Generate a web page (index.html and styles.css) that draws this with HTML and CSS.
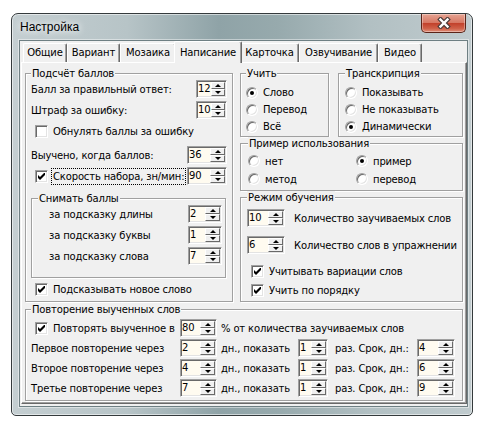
FILE: index.html
```html
<!DOCTYPE html>
<html lang="ru">
<head>
  <meta charset="UTF-8" />
  <title>Настройка</title>
  <link rel="stylesheet" href="styles.css">
</head>
<body>
  <div class="window">
    <div class="titlebar">
      <span class="title">Настройка</span>
      <div class="close">
        <svg width="16" height="12" viewBox="0 0 16 12">
          <path d="M4.5 2.5 L11.5 9.5 M11.5 2.5 L4.5 9.5" stroke="#4a3b38" stroke-width="4.6" stroke-linecap="square" fill="none"/>
          <path d="M4.5 2.5 L11.5 9.5 M11.5 2.5 L4.5 9.5" stroke="#fff" stroke-width="2.4" stroke-linecap="square" fill="none"/>
        </svg>
      </div>
    </div>
    <div class="client">
      <div class="tabs">
        <span class="tab tab-general">Общие</span><span class="tab tab-variant">Вариант</span><span class="tab tab-mosaic">Мозаика</span><span class="tab tab-writing active">Написание</span><span class="tab tab-card">Карточка</span><span class="tab tab-voice">Озвучивание</span><span class="tab tab-video">Видео</span>
      </div>
      <div class="panel">
        <div class="top">
          <!-- left column -->
          <fieldset class="group g-score">
            <legend>Подсчёт баллов</legend>
            <div class="row">
              <span>Балл за правильный ответ:</span>
              <span class="spin w31"><span class="val">12</span><i class="arr"><b class="up"></b><b class="dn"></b></i></span>
            </div>
            <div class="row mt3">
              <span>Штраф за ошибку:</span>
              <span class="spin w31"><span class="val">10</span><i class="arr"><b class="up"></b><b class="dn"></b></i></span>
            </div>
            <div class="check reset">
              <i class="cb"></i><span>Обнулять баллы за ошибку</span>
            </div>
            <div class="row mt8">
              <span>Выучено, когда баллов:</span>
              <span class="spin w40"><span class="val">36</span><i class="arr"><b class="up"></b><b class="dn"></b></i></span>
            </div>
            <div class="row mt3">
              <span class="check inrow">
                <i class="cb"><svg width="7" height="7" viewBox="0 0 7 7"><path d="M0 2 L2 4 L6 0 L7 0 L7 2 L2 7 L0 5 Z" fill="#000"/></svg></i><span class="focus">Скорость набора, зн/мин:</span>
              </span>
              <span class="spin w40"><span class="val">90</span><i class="arr"><b class="up"></b><b class="dn"></b></i></span>
            </div>
            <fieldset class="group sub">
              <legend>Снимать баллы</legend>
              <div class="row">
                <span>за подсказку длины</span>
                <span class="spin w34"><span class="val">2</span><i class="arr"><b class="up"></b><b class="dn"></b></i></span>
              </div>
              <div class="row mt3">
                <span>за подсказку буквы</span>
                <span class="spin w34"><span class="val">1</span><i class="arr"><b class="up"></b><b class="dn"></b></i></span>
              </div>
              <div class="row mt3">
                <span>за подсказку слова</span>
                <span class="spin w34"><span class="val">7</span><i class="arr"><b class="up"></b><b class="dn"></b></i></span>
              </div>
            </fieldset>
            <div class="check hint">
              <i class="cb"><svg width="7" height="7" viewBox="0 0 7 7"><path d="M0 2 L2 4 L6 0 L7 0 L7 2 L2 7 L0 5 Z" fill="#000"/></svg></i><span>Подсказывать новое слово</span>
            </div>
          </fieldset>

          <!-- right column -->
          <div class="right">
            <div class="pair">
              <fieldset class="group g-learn">
                <legend>Учить</legend>
                <div class="opt"><i class="rb on"></i>Слово</div>
                <div class="opt"><i class="rb"></i>Перевод</div>
                <div class="opt"><i class="rb"></i>Всё</div>
              </fieldset>
              <fieldset class="group g-trans">
                <legend>Транскрипция</legend>
                <div class="opt"><i class="rb"></i>Показывать</div>
                <div class="opt"><i class="rb"></i>Не показывать</div>
                <div class="opt"><i class="rb on"></i>Динамически</div>
              </fieldset>
            </div>
            <fieldset class="group g-example">
              <legend>Пример использования</legend>
              <div class="opts">
                <div class="opt"><i class="rb"></i>нет</div>
                <div class="opt"><i class="rb on"></i>пример</div>
                <div class="opt"><i class="rb"></i>метод</div>
                <div class="opt"><i class="rb"></i>перевод</div>
              </div>
            </fieldset>
            <fieldset class="group g-mode">
              <legend>Режим обучения</legend>
              <div class="count">
                <span class="spin w38"><span class="val">10</span><i class="arr"><b class="up"></b><b class="dn"></b></i></span>
                <span class="count-text">Количество заучиваемых слов</span>
              </div>
              <div class="count mt9">
                <span class="spin w38"><span class="val">6</span><i class="arr"><b class="up"></b><b class="dn"></b></i></span>
                <span class="count-text">Количество слов в упражнении</span>
              </div>
              <div class="check variations">
                <i class="cb"><svg width="7" height="7" viewBox="0 0 7 7"><path d="M0 2 L2 4 L6 0 L7 0 L7 2 L2 7 L0 5 Z" fill="#000"/></svg></i><span>Учитывать вариации слов</span>
              </div>
              <div class="check order">
                <i class="cb"><svg width="7" height="7" viewBox="0 0 7 7"><path d="M0 2 L2 4 L6 0 L7 0 L7 2 L2 7 L0 5 Z" fill="#000"/></svg></i><span>Учить по порядку</span>
              </div>
            </fieldset>
          </div>
        </div>

        <fieldset class="group g-repeat">
          <legend>Повторение выученных слов</legend>
          <div class="rep">
            <span class="lbl check">
              <i class="cb"><svg width="7" height="7" viewBox="0 0 7 7"><path d="M0 2 L2 4 L6 0 L7 0 L7 2 L2 7 L0 5 Z" fill="#000"/></svg></i><span>Повторять выученное в</span>
            </span>
            <span class="spin w37"><span class="val">80</span><i class="arr"><b class="up"></b><b class="dn"></b></i></span>
            <span class="t1">% от количества заучиваемых слов</span>
          </div>
          <div class="rep">
            <span class="lbl">Первое повторение через</span>
            <span class="spin w37"><span class="val">2</span><i class="arr"><b class="up"></b><b class="dn"></b></i></span>
            <span class="t1">дн., показать</span>
            <span class="spin w30"><span class="val">1</span><i class="arr"><b class="up"></b><b class="dn"></b></i></span>
            <span class="t2">раз. Срок, дн.:</span>
            <span class="spin w38"><span class="val">4</span><i class="arr"><b class="up"></b><b class="dn"></b></i></span>
          </div>
          <div class="rep">
            <span class="lbl">Второе повторение через</span>
            <span class="spin w37"><span class="val">4</span><i class="arr"><b class="up"></b><b class="dn"></b></i></span>
            <span class="t1">дн., показать</span>
            <span class="spin w30"><span class="val">1</span><i class="arr"><b class="up"></b><b class="dn"></b></i></span>
            <span class="t2">раз. Срок, дн.:</span>
            <span class="spin w38"><span class="val">6</span><i class="arr"><b class="up"></b><b class="dn"></b></i></span>
          </div>
          <div class="rep">
            <span class="lbl">Третье повторение через</span>
            <span class="spin w37"><span class="val">7</span><i class="arr"><b class="up"></b><b class="dn"></b></i></span>
            <span class="t1">дн., показать</span>
            <span class="spin w30"><span class="val">1</span><i class="arr"><b class="up"></b><b class="dn"></b></i></span>
            <span class="t2">раз. Срок, дн.:</span>
            <span class="spin w38"><span class="val">9</span><i class="arr"><b class="up"></b><b class="dn"></b></i></span>
          </div>
        </fieldset>
      </div>
    </div>
  </div>
</body>
</html>
```

FILE: styles.css
```css
* {
  margin: 0;
  padding: 0;
  box-sizing: border-box;
}
body {
  background: #fff;
  font-family: "DejaVu Sans", "Liberation Sans", sans-serif;
  font-size: 10px;
  line-height: 13px;
  letter-spacing: -0.15px;
  color: #000;
}

/* window frame */
.window {
  margin: 13px 0 0 11px;
  width: 462px;
  height: 403px;
  padding: 0 4px 8px 7px;
  border: 1px solid #343a3c;
  border-radius: 7px 7px 5px 5px;
  background: linear-gradient(90deg, #c4ced1 0%, #b7c4c7 25%, #8fa3a7 45%, #97aaad 58%, #b2c0c3 78%, #c0cbce 100%);
  box-shadow: inset 0 0 0 1px rgba(255, 255, 255, 0.55);
}
.titlebar {
  height: 26px;
  display: flex;
  align-items: flex-start;
}
.title {
  font-family: "Liberation Sans", sans-serif;
  font-size: 12px;
  letter-spacing: 0;
  line-height: 26px;
  padding-left: 1px;
  text-shadow: 0 0 6px #fff, 0 0 10px rgba(255, 255, 255, 0.8);
}
.close {
  margin-left: auto;
  margin-right: 2px;
  width: 45px;
  height: 19px;
  border: 1px solid #5b2418;
  border-top: 0;
  border-radius: 0 0 5px 5px;
  background: linear-gradient(#e6a493 0%, #d77864 48%, #c2412b 52%, #cf6048 80%, #e0907a 100%);
  box-shadow: inset 0 0 0 1px rgba(255, 255, 255, 0.35);
  display: flex;
  align-items: center;
  justify-content: center;
}
.client {
  height: 367px;
  border: 1px solid #6e7f83;
  background: #f0f0f0;
  box-shadow: 0 0 0 1px rgba(255, 255, 255, 0.45);
}

/* tabs */
.tabs {
  display: flex;
  align-items: flex-end;
  height: 21px;
  padding-left: 3px;
}
.tab {
  height: 19px;
  padding-top: 1px;
  border: 1px solid;
  border-color: #fff #696969 transparent #fff;
  border-bottom: 0;
  border-radius: 2px 2px 0 0;
  box-shadow: inset -1px 0 0 #a0a0a0;
  line-height: 15px;
  text-align: center;
  white-space: nowrap;
}
.tab.active {
  height: 22px;
  margin: 0 -2px -1px;
  padding-top: 3px;
  position: relative;
  z-index: 1;
  background: #f0f0f0;
}
.tab-general { width: 44px; }
.tab-variant { width: 53px; }
.tab-mosaic { width: 56px; }
.tab-writing { width: 68px; }
.tab-card { width: 59px; }
.tab-voice { width: 79px; }
.tab-video { width: 44px; }

.panel {
  margin-left: 1px;
  width: 446px;
  height: 342px;
  border: 1px solid;
  border-color: #fff #696969 #696969 #fff;
  box-shadow: inset -1px -1px 0 #a0a0a0;
  padding: 4px 2px 0 3px;
}
.top {
  display: flex;
  gap: 7px;
  height: 235px;
}

/* group boxes */
fieldset.group {
  border: 1px solid #a0a0a0;
  box-shadow: 1px 1px 0 #fff, inset 1px 1px 0 #fff;
  min-width: 0;
  padding: 0;
}
legend {
  padding: 0 1px;
  line-height: 13px;
  background: #f0f0f0;
}
.g-score {
  width: 208px;
  height: 235px;
  padding: 0 5px !important;
}
.sub {
  width: 195px;
  height: 86px;
  margin-top: 7px;
  padding: 0 3px 0 6px !important;
}
.sub .row {
  padding-left: 11px;
}
.right {
  width: 223px;
  display: flex;
  flex-direction: column;
}
.pair {
  display: flex;
  gap: 9px;
  height: 70px;
}
.g-learn {
  width: 89px;
  height: 70px;
  padding: 4px 0 0 5px !important;
}
.g-trans {
  width: 125px;
  height: 70px;
  padding: 4px 0 0 6px !important;
}
.g-example {
  height: 54px;
  padding: 2px 0 0 7px !important;
}
.opts {
  display: grid;
  grid-template-columns: 108px auto;
}
.g-mode {
  height: 111px;
  padding: 5px 0 0 6px !important;
}
.g-repeat {
  margin-top: 1px;
  width: 438px;
  height: 98px;
  padding: 2px 0 0 5px !important;
}

/* rows */
.row {
  display: flex;
  align-items: center;
  justify-content: space-between;
  height: 18px;
  white-space: nowrap;
}
.mt3 {
  margin-top: 3px;
}
.mt8 {
  margin-top: 8px;
}
.mt9 {
  margin-top: 9px;
}
.check {
  display: flex;
  align-items: center;
  height: 13px;
  padding-left: 4px;
  white-space: nowrap;
}
.check .cb {
  margin-right: 5px;
}
.check.inrow {
  height: 18px;
}
.check.inrow .cb {
  margin-right: 4px;
}
.reset {
  margin-top: 6px;
}
.hint {
  margin-top: 5px;
}
.variations {
  margin-top: 11px;
}
.order {
  margin-top: 6px;
}
.focus {
  outline: 1px dotted #000;
  padding: 1px;
}
.opt {
  display: flex;
  align-items: center;
  height: 17px;
  white-space: nowrap;
}
.g-example .opt {
  height: 18px;
}
.opt .rb {
  margin-right: 5px;
}
.count {
  display: flex;
  align-items: center;
  height: 18px;
  white-space: nowrap;
}
.count-text {
  margin-left: 9px;
}
.rep {
  display: flex;
  align-items: center;
  height: 20px;
  white-space: nowrap;
}
.rep .lbl {
  width: 149px;
}
.rep .t1 {
  margin-left: 4px;
  width: 77px;
}
.rep .t2 {
  margin-left: 7px;
  width: 82px;
}

/* controls */
.spin {
  display: flex;
  height: 18px;
  padding: 1px;
  border: 1px solid;
  border-color: #a0a0a0 #fff #fff #a0a0a0;
  box-shadow: inset 1px 1px 0 #696969, inset -1px -1px 0 #e3e3e3;
  background: #fffbf0;
  flex-shrink: 0;
  letter-spacing: 0;
}
.w30 { width: 30px; }
.w31 { width: 31px; }
.w34 { width: 34px; }
.w37 { width: 37px; }
.w38 { width: 38px; }
.w40 { width: 40px; }
.val {
  flex: 1;
  line-height: 14px;
}
.arr {
  width: 15px;
  display: flex;
  flex-direction: column;
  background: #f0f0f0;
}
.arr b {
  flex: 1;
  display: flex;
  align-items: center;
  justify-content: center;
  border: 1px solid;
  border-color: #fff #696969 #696969 #fff;
}
.arr .up::after {
  content: "";
  border: 3px solid transparent;
  border-top: 0;
  border-bottom: 3px solid #000;
}
.arr .dn::after {
  content: "";
  border: 3px solid transparent;
  border-bottom: 0;
  border-top: 3px solid #000;
}
.cb {
  width: 13px;
  height: 13px;
  flex-shrink: 0;
  border: 1px solid;
  border-color: #a0a0a0 #fff #fff #a0a0a0;
  box-shadow: inset 1px 1px 0 #696969, inset -1px -1px 0 #e3e3e3;
  background: #fff;
  display: flex;
  align-items: center;
  justify-content: center;
}
.rb {
  width: 12px;
  height: 12px;
  flex-shrink: 0;
  border-radius: 50%;
  border: 1px solid;
  border-color: #a0a0a0 #fff #fff #a0a0a0;
  box-shadow: inset 1px 1px 0 #696969, inset -1px -1px 0 #e3e3e3;
  background: #fff;
  display: flex;
  align-items: center;
  justify-content: center;
}
.rb.on::after {
  content: "";
  width: 4px;
  height: 4px;
  border-radius: 50%;
  background: #000;
}
```
